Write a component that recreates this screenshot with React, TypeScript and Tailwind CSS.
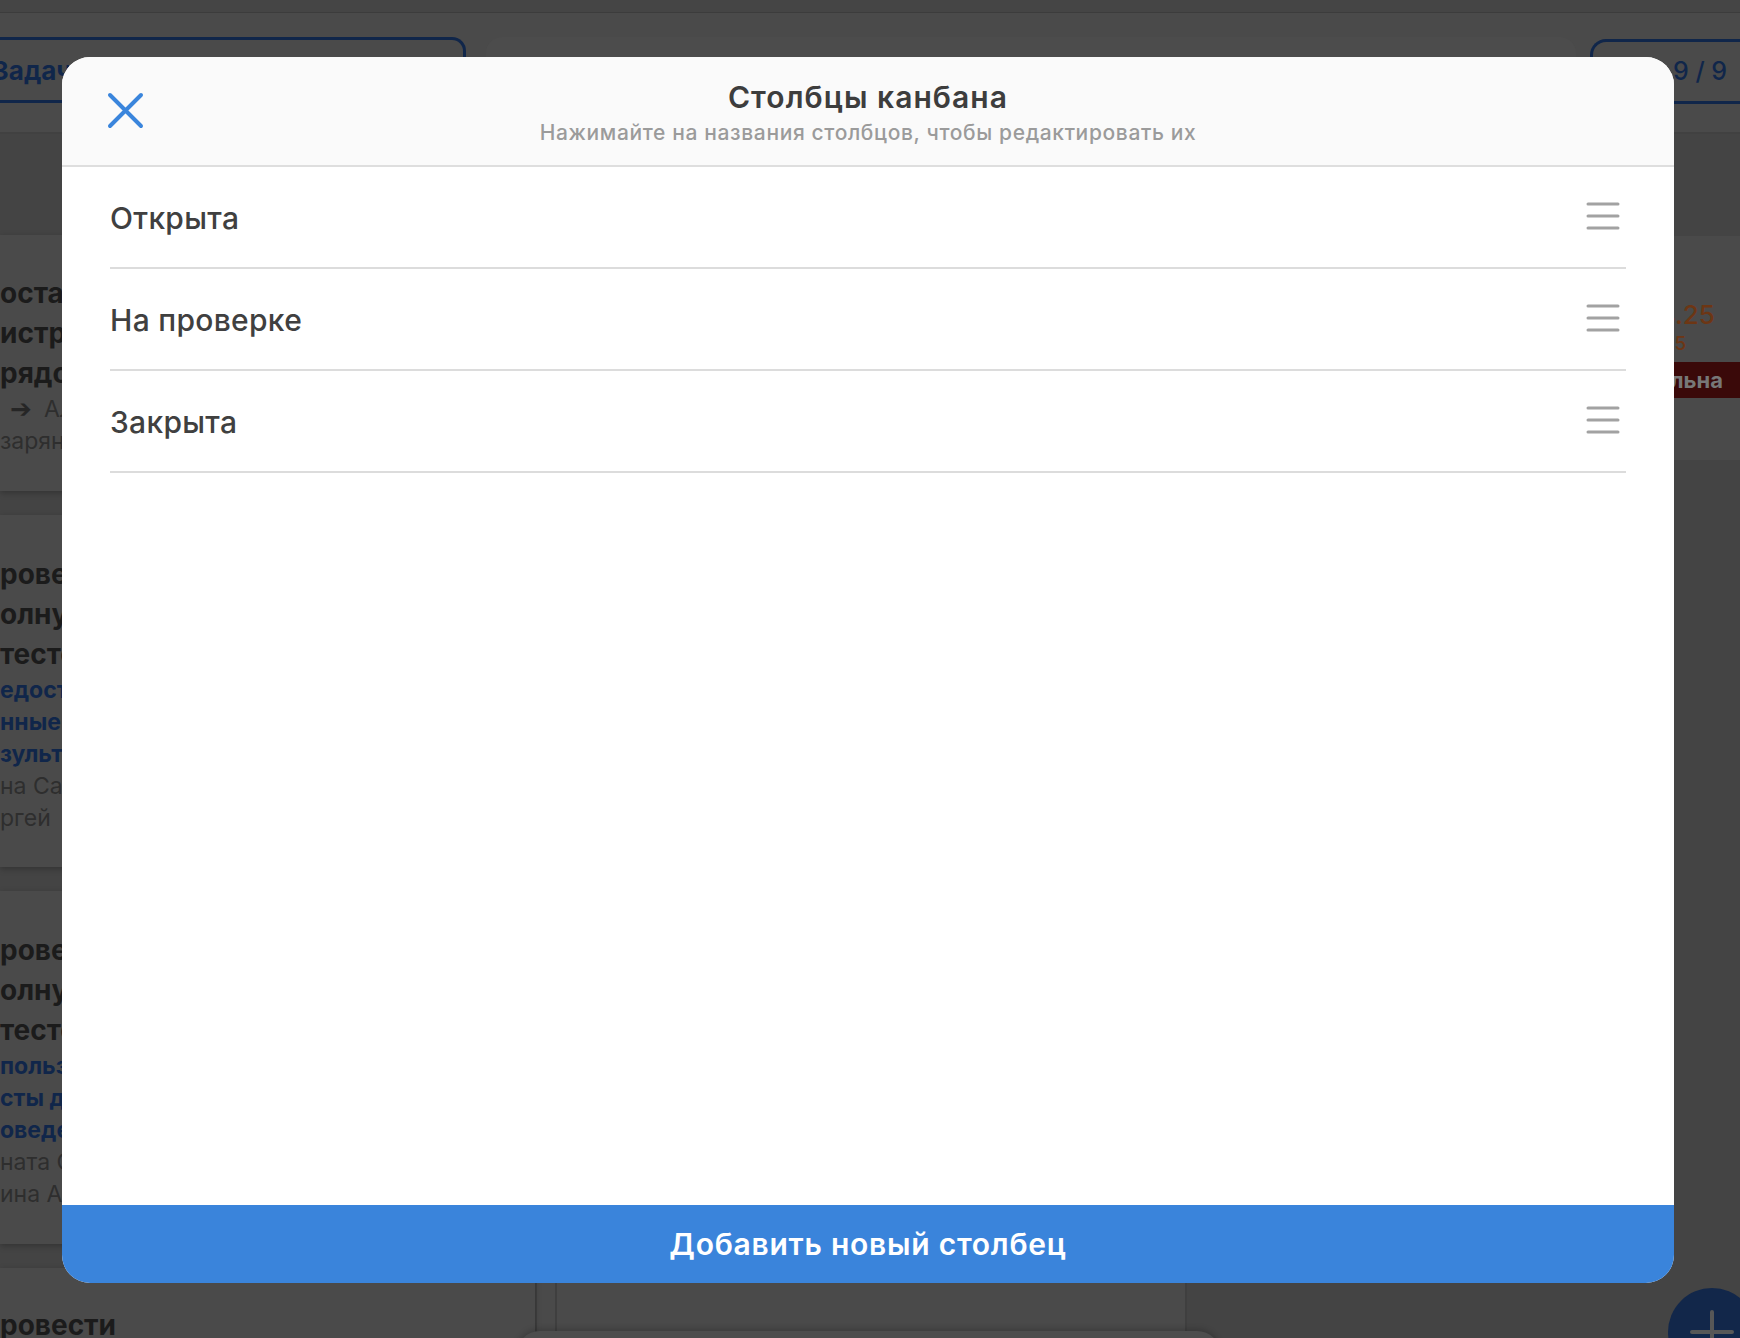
import React from "react";

const columns = ["Открыта", "На проверке", "Закрыта"];

function CloseIcon() {
  return (
    <svg width="37" height="37" viewBox="0 0 37 37" fill="none">
      <path d="M3 3 L34 34 M34 3 L3 34" stroke="#3a85dc" strokeWidth="4" strokeLinecap="round" />
    </svg>
  );
}

function DragIcon() {
  return (
    <svg width="34" height="28" viewBox="0 0 34 28" fill="none">
      <path d="M2 2 H32 M2 14 H32 M2 26 H32" stroke="#a2a2a2" strokeWidth="3" strokeLinecap="round" />
    </svg>
  );
}

function LeftCard({
  title,
  blue,
  meta,
  className,
  arrow,
}: {
  title: string[];
  blue?: string[];
  meta: string[];
  className: string;
  arrow?: string;
}) {
  return (
    <div className={"shrink-0 bg-[#4a4a4a] shadow-[0_2px_6px_rgba(0,0,0,0.25)] " + className}>
      {title.map((t) => (
        <div key={t} className="whitespace-nowrap text-[28px] font-bold leading-[40px] text-[#1b1b1b]">
          {t}
        </div>
      ))}
      {blue?.map((t) => (
        <div key={t} className="whitespace-nowrap text-[23px] font-bold leading-[32px] text-[#10264a]">
          {t}
        </div>
      ))}
      {arrow && (
        <div className="flex items-center whitespace-nowrap pl-[10px] text-[23px] leading-[32px] text-[#2e2e2e]">
          <span className="w-[34px] font-['DejaVu_Sans',sans-serif] text-[26px] leading-[32px] text-[#262626]">➔</span>
          <span>{arrow}</span>
        </div>
      )}
      {meta.map((t) => (
        <div key={t} className="whitespace-nowrap text-[23px] leading-[32px] text-[#2e2e2e]">
          {t}
        </div>
      ))}
    </div>
  );
}

export default function App() {
  return (
    <div className="relative h-[1338px] w-[1740px] overflow-hidden bg-[#4a4a4a] font-['Inter',sans-serif]">
      {/* background page */}
      <div className="h-[13px] border-b border-[#3c3c3c] bg-[#454545]" />
      <div className="flex h-[121px] items-start border-b-2 border-[#414141] pt-[24px]">
        <div className="flex h-[66px] w-[466px] shrink-0 items-center rounded-tr-[14px] border-[3px] border-l-0 border-[#10264a]">
          <span className="-ml-[8px] text-[26px] font-bold text-[#10264a]">Задачи</span>
        </div>
        <div className="ml-[20px] h-[110px] w-[1090px] shrink-0 rounded-[16px] bg-[#4c4c4c]" />
        <div className="ml-[14px] mt-[2px] flex h-[65px] flex-1 items-center rounded-l-[16px] border-[3px] border-r-0 border-[#10264a] pl-[80px]">
          <span className="text-[25px] font-medium text-[#10264a]">9 / 9</span>
        </div>
      </div>
      <div className="flex h-[1204px]">
        <div className="flex w-[537px] shrink-0 flex-col gap-[24px] border-r-2 border-[#3f3f3f] bg-[#444444] pt-[101px]">
          <LeftCard
            className="h-[256px] pt-[38px]"
            title={["оставить", "иструкции", "рядок"]}
            arrow="Алексей"
            meta={["зарян"]}
          />
          <LeftCard
            className="h-[352px] pt-[39px]"
            title={["роверить", "олную", "тестовую"]}
            blue={["едоставить", "нные", "зультаты"]}
            meta={["на Сазонова", "ргей"]}
          />
          <LeftCard
            className="h-[353px] pt-[39px]"
            title={["роверить", "олную", "тестовую"]}
            blue={["пользовать", "сты для", "оведения"]}
            meta={["ната Смирнова", "ина Андреева"]}
          />
          <LeftCard className="h-[200px] pt-[37px]" title={["ровести"]} meta={[]} />
        </div>
        <div className="relative ml-[18px] w-[632px] shrink-0 border-x-2 border-[#3f3f3f] bg-[#4a4a4a]">
          <div className="absolute bottom-[-30px] left-[-41px] h-[37px] w-[705px] rounded-t-[24px] bg-[#4d4d4d] shadow-[0_-2px_6px_rgba(0,0,0,0.2)]" />
        </div>
        <div className="flex-1 bg-[#444444] pl-[20px] pt-[102px]">
          <div className="flex h-[224px] flex-col items-start bg-[#4a4a4a] pl-[401px] pt-[63px]">
            <div className="text-[26px] font-medium leading-[32px] text-[#6d3614]">12.04.25</div>
            <div className="text-[19px] font-medium leading-[26px] text-[#6d3614]">12.04.25</div>
            <div className="-ml-[415px] mt-[5px] flex h-[36px] w-[560px] items-center justify-end bg-[#3a0909] pr-[30px]">
              <span className="text-[22px] font-bold text-[#777777]">Актуальна</span>
            </div>
          </div>
        </div>
      </div>

      {/* floating add button */}
      <div className="absolute left-[1668px] top-[1288px] flex h-[88px] w-[88px] items-center justify-center rounded-full bg-[#12274a]">
        <svg width="44" height="44" viewBox="0 0 44 44" fill="none">
          <path d="M22 2 V42 M2 22 H42" stroke="#575757" strokeWidth="4" strokeLinecap="round" />
        </svg>
      </div>

      {/* modal */}
      <div className="absolute inset-0 pb-[55px] pl-[62px] pr-[66px] pt-[57px]">
        <div className="flex h-full flex-col overflow-hidden rounded-[28px] bg-white">
          <div className="relative flex h-[110px] shrink-0 flex-col items-center justify-center border-b-2 border-[#dedede] bg-[#fafafa] pt-[3px]">
            <button className="absolute left-[45px] top-[35px]">
              <CloseIcon />
            </button>
            <div className="text-[30px] font-semibold leading-[36px] tracking-[0.035em] text-[#3d3d3d]">
              Столбцы канбана
            </div>
            <div className="mt-[5px] text-[21px] font-medium leading-[26px] tracking-[0.03em] text-[#9b9b9b]">
              Нажимайте на названия столбцов, чтобы редактировать их
            </div>
          </div>
          <div className="flex-1 px-12">
            {columns.map((c) => (
              <div
                key={c}
                className="flex h-[102px] items-center justify-between border-b-2 border-[#dcdcdc] pr-[6px] pt-[3px]"
              >
                <span className="text-[30px] font-medium tracking-[0.01em] text-[#404040]">{c}</span>
                <span className="mb-[6px]">
                  <DragIcon />
                </span>
              </div>
            ))}
          </div>
          <button className="h-[78px] shrink-0 bg-[#3a84db] text-[30px] font-semibold tracking-[0.025em] text-white">
            Добавить новый столбец
          </button>
        </div>
      </div>
    </div>
  );
}
